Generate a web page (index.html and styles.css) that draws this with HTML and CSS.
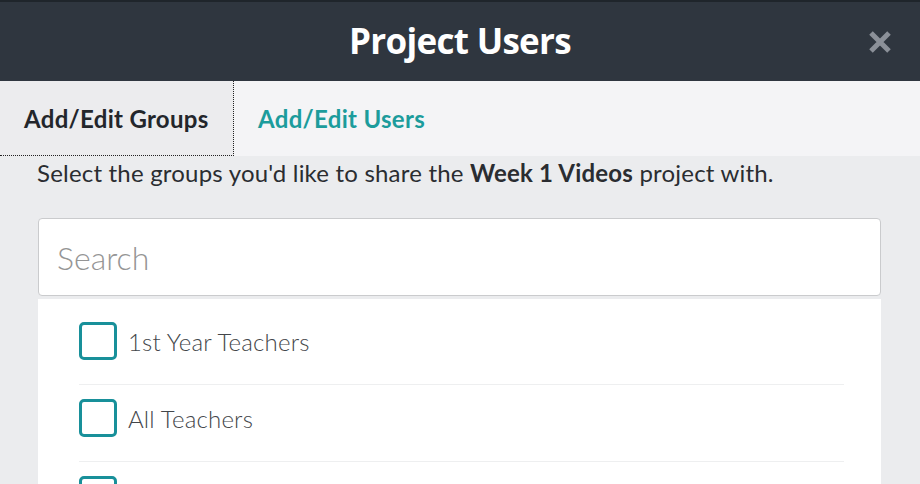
FILE: index.html
```html
<!DOCTYPE html>
<html>
<head>
<meta charset="utf-8">
<link rel="stylesheet" href="styles.css">
</head>
<body>
<div class="modal">
  <header class="header">
    <h1 class="title">Project Users</h1>
    <button class="close" aria-label="Close">
      <svg width="26" height="26" viewBox="0 0 26 26"><path d="M4 4 L22 22 M22 4 L4 22" stroke="#8b9098" stroke-width="5" stroke-linecap="butt"/></svg>
    </button>
  </header>
  <nav class="tabs">
    <div class="tab active">Add/Edit Groups</div>
    <div class="tab link">Add/Edit Users</div>
  </nav>
  <main class="body">
    <p class="desc">Select the groups you'd like to share the <b>Week 1 Videos</b> project with.</p>
    <div class="search">Search</div>
    <ul class="list">
      <li class="item"><span class="check"></span><span class="label">1st Year Teachers</span></li>
      <li class="item"><span class="check"></span><span class="label">All Teachers</span></li>
      <li class="item"><span class="check"></span><span class="label">&nbsp;</span></li>
    </ul>
  </main>
</div>
</body>
</html>
```
FILE: styles.css
```css
html, body {
  margin: 0;
  padding: 0;
  background: #ebecee;
  overflow: hidden;
}
.modal {
  width: 920px;
  height: 484px;
  display: flex;
  flex-direction: column;
  overflow: hidden;
  font-family: Lato, "Liberation Sans", sans-serif;
}
.header {
  flex-shrink: 0;
  height: 79px;
  background: #2f363f;
  border-top: 2px solid #1f252b;
  display: flex;
  align-items: center;
  justify-content: center;
  position: relative;
}
.title {
  margin: 0 0 2px 0;
  color: #ffffff;
  font-family: "Open Sans", sans-serif;
  font-weight: 700;
  font-size: 35px;
  letter-spacing: -0.7px;
}
.close {
  position: absolute;
  right: 27px;
  top: 27px;
  background: none;
  border: 0;
  padding: 0;
  width: 26px;
  height: 26px;
  display: flex;
}
.tabs {
  flex-shrink: 0;
  height: 75px;
  background: #f4f4f6;
  display: flex;
}
.tab {
  display: flex;
  align-items: center;
  font-weight: 700;
  font-size: 24px;
  padding: 0 24px;
  letter-spacing: 0.3px;
}
.tab.active {
  width: 185px;
  background: #ececee;
  color: #23262b;
  border-right: 1px dotted #222;
  border-bottom: 1px dotted #222;
}
.tab.link {
  color: #1c9c9c;
}
.body {
  flex: 1;
  min-height: 0;
  overflow: hidden;
  padding: 0 39px 0 38px;
  display: flex;
  flex-direction: column;
}
.desc {
  margin: 3px 0 0 -1px;
  font-size: 24px;
  letter-spacing: 0.2px;
  color: #2a2d31;
  line-height: 28px;
  white-space: nowrap;
}
.desc b {
  font-weight: 700;
}
.search {
  flex-shrink: 0;
  margin-top: 31px;
  height: 76px;
  background: #fff;
  border: 1px solid #cacbcd;
  border-radius: 4px;
  display: flex;
  align-items: center;
  padding-left: 18px;
  font-size: 32px;
  font-weight: 300;
  color: #959595;
}
.list {
  margin: 3px 0 0 0;
  padding: 9px 37px 0 41px;
  background: #fff;
  list-style: none;
  flex: 1;
  min-height: 0;
  overflow: hidden;
}
.item {
  padding: 14px 0 24px 0;
  display: flex;
  align-items: center;
  border-bottom: 1px solid #eeeff0;
}
.check {
  width: 32px;
  height: 32px;
  border: 3px solid #18909a;
  border-radius: 5px;
  box-sizing: content-box;
  flex-shrink: 0;
}
.label {
  margin-left: 11px;
  font-size: 24px;
  font-weight: 300;
  letter-spacing: 0.2px;
  color: #43464a;
}
```
